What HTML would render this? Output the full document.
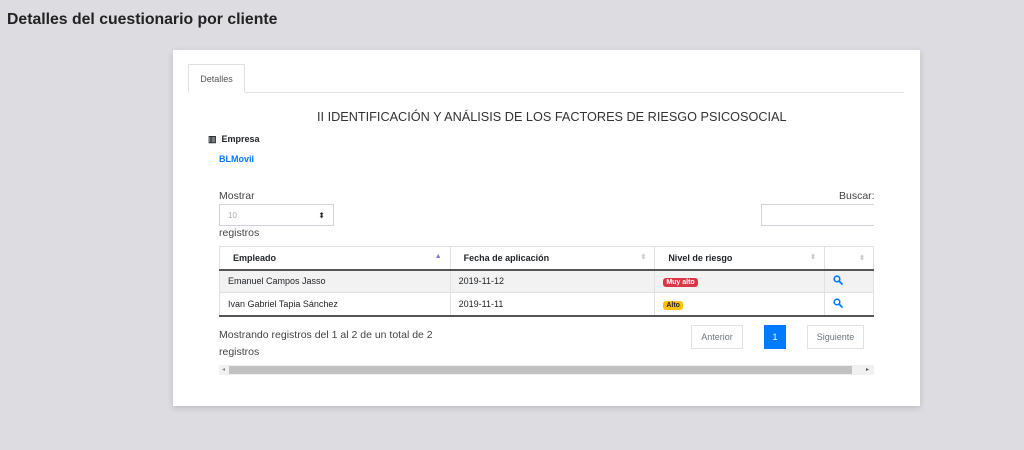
<!DOCTYPE html>
<html><head><meta charset="utf-8"><style>
*{box-sizing:border-box;margin:0;padding:0}
body{width:1024px;height:450px;background:#dddce1;font-family:"Liberation Sans",sans-serif;color:#212529;position:relative;overflow:hidden}
.a{position:absolute;white-space:nowrap}
.card{position:absolute;left:173px;top:50px;width:747px;height:356px;background:#fff;box-shadow:0 2px 6px rgba(0,0,0,.15)}
table{border-collapse:collapse;position:absolute;left:219px;top:246px;width:655px;font-size:9px}
td,th{border:1px solid #dee2e6;height:23px;padding:0 8px;text-align:left}
th{font-weight:bold;padding-left:13px;border-bottom:2px solid #555}
tr.g td{background:#f2f2f2}
tbody tr:last-child td{border-bottom:2px solid #555}
.s{float:right;color:#ccc;font-size:7px}
.b{color:#fff;font-size:7px;font-weight:bold;padding:1px 3px;border-radius:3px;background:#dc3545}
.btn{position:absolute;border:1px solid #dee2e6;font-size:9px;color:#6c757d;text-align:center;line-height:22px;height:24px}
</style></head><body>
<div class="a" style="left:7px;top:11px;font-size:15.8px;font-weight:bold;color:#222">Detalles del cuestionario por cliente</div>
<div class="card"></div>
<div class="a" style="left:188px;top:92px;width:716px;border-top:1px solid #dee2e6"></div>
<div class="a" style="left:188px;top:64px;width:57px;height:29px;border:1px solid #dee2e6;border-bottom:1px solid #fff;background:#fff;font-size:9px;color:#555;text-align:center;line-height:28px">Detalles</div>
<div class="a" style="left:317px;top:110px;font-size:12.7px;color:#333">II IDENTIFICACIÓN Y ANÁLISIS DE LOS FACTORES DE RIESGO PSICOSOCIAL</div>
<div class="a" style="left:208px;top:134px;font-size:9px;font-weight:bold">▥&nbsp;&nbsp;Empresa</div>
<div class="a" style="left:219px;top:154px;font-size:9px;font-weight:bold;color:#007bff">BLMovil</div>
<div class="a" style="left:219px;top:190px;font-size:10.5px;color:#444">Mostrar</div>
<div class="a" style="left:219px;top:204px;width:115px;height:22px;border:1px solid #ced4da;font-size:8px;color:#aaa;padding:6px 8px">10<span style="float:right;color:#333">⬍</span></div>
<div class="a" style="left:219px;top:227px;font-size:10.5px;color:#444">registros</div>
<div class="a" style="left:839px;top:190px;font-size:10.5px;color:#444">Buscar:</div>
<div class="a" style="left:761px;top:204px;width:113px;height:22px;border:1px solid #ced4da;border-right:none"></div>
<table>
<colgroup><col style="width:231px"><col style="width:205px"><col style="width:170px"><col style="width:49px"></colgroup>
<thead><tr><th>Empleado<span class="s" style="color:#7a7ad8">▲</span></th><th>Fecha de aplicación<span class="s">⬍</span></th><th>Nivel de riesgo<span class="s">⬍</span></th><th><span class="s">⬍</span></th></tr></thead>
<tbody>
<tr class="g"><td>Emanuel Campos Jasso</td><td>2019-11-12</td><td><span class="b">Muy alto</span></td><td><svg width="10" height="10" viewBox="0 0 10 10"><circle cx="4" cy="4" r="2.8" fill="none" stroke="#007bff" stroke-width="1.6"/><path d="M6 6 L9 9" stroke="#007bff" stroke-width="1.8" stroke-linecap="round"/></svg></td></tr>
<tr><td>Ivan Gabriel Tapia Sánchez</td><td>2019-11-11</td><td><span class="b" style="background:#ffc107;color:#222">Alto</span></td><td><svg width="10" height="10" viewBox="0 0 10 10"><circle cx="4" cy="4" r="2.8" fill="none" stroke="#007bff" stroke-width="1.6"/><path d="M6 6 L9 9" stroke="#007bff" stroke-width="1.8" stroke-linecap="round"/></svg></td></tr>
</tbody></table>
<div class="a" style="left:219px;top:327px;font-size:10.5px;color:#444;line-height:17px">Mostrando registros del 1 al 2 de un total de 2<br>registros</div>
<div class="btn" style="left:691px;top:325px;width:52px">Anterior</div>
<div class="btn" style="left:764px;top:325px;width:22px;background:#007bff;border-color:#007bff;color:#fff">1</div>
<div class="btn" style="left:807px;top:325px;width:57px">Siguiente</div>
<div class="a" style="left:219px;top:365px;width:655px;height:10px;background:#f1f1f1"></div>
<div class="a" style="left:229px;top:366px;width:623px;height:8px;background:#c1c1c1"></div>
<div class="a" style="left:222px;top:366px;font-size:6px;color:#888">◂</div>
<div class="a" style="left:866px;top:366px;font-size:6px;color:#555">▸</div>
</body></html>
